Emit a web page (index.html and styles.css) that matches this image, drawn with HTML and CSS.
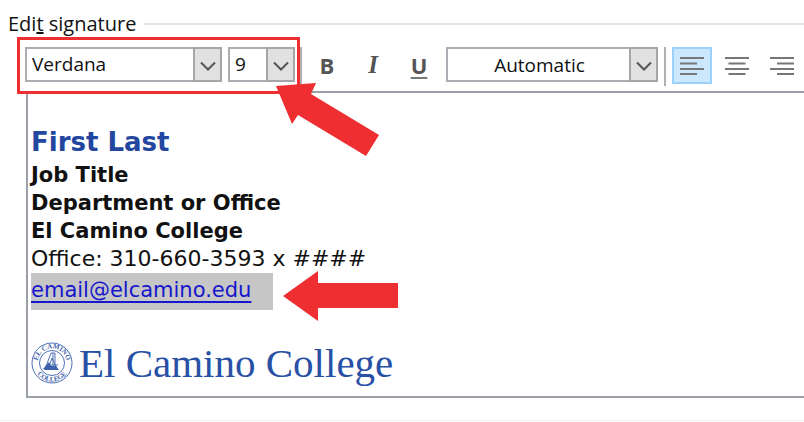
FILE: index.html
```html
<!DOCTYPE html>
<html lang="en">
<head>
    <meta charset="UTF-8">
    <meta name="viewport" content="width=device-width, initial-scale=1.0">
    <title>Edit signature</title>
    <link rel="stylesheet" href="styles.css">
</head>
<body>
    <main class="panel">
        <h1 class="panel-title"><span>Edi<u>t</u> signature</span></h1>

        <div class="toolbar">
            <div class="font-group">
                <div class="combo combo-font">
                    <select aria-label="Font">
                        <option>Verdana</option>
                    </select>
                    <span class="combo-arrow"><svg width="16" height="10" viewBox="0 0 16 10"><path d="M1 1.500L8 8.500L15 1.500"/></svg></span>
                </div>
                <div class="combo combo-size">
                    <select aria-label="Font size">
                        <option>9</option>
                    </select>
                    <span class="combo-arrow"><svg width="16" height="10" viewBox="0 0 16 10"><path d="M1 1.500L8 8.500L15 1.500"/></svg></span>
                </div>
            </div>
            <span class="separator"></span>
            <div class="style-group">
                <button class="style-button" type="button" aria-label="Bold">B</button>
                <button class="style-button italic" type="button" aria-label="Italic">I</button>
                <button class="style-button underline" type="button" aria-label="Underline"><span>U</span></button>
            </div>
            <div class="combo combo-color">
                <select aria-label="Font color">
                    <option>Automatic</option>
                </select>
                <span class="combo-arrow"><svg width="16" height="10" viewBox="0 0 16 10"><path d="M1 1.500L8 8.500L15 1.500"/></svg></span>
            </div>
            <span class="separator"></span>
            <div class="align-group">
                <button class="align-button active" type="button" aria-label="Align left">
                    <svg width="26" height="20" viewBox="0 0 26 20"><path d="M1 2H25M1 7.500H18M1 13H25M1 18H18"/></svg>
                </button>
                <button class="align-button" type="button" aria-label="Center">
                    <svg width="26" height="20" viewBox="0 0 26 20"><path d="M1 2H25M4.500 7.500H21.500M1 13H25M4.500 18H21.500"/></svg>
                </button>
                <button class="align-button" type="button" aria-label="Align right">
                    <svg width="26" height="20" viewBox="0 0 26 20"><path d="M1 2H25M8 7.500H25M1 13H25M8 18H25"/></svg>
                </button>
            </div>
        </div>

        <div class="editor">
            <p class="name">First Last</p>
            <p class="detail">Job Title</p>
            <p class="detail">Department or Office</p>
            <p class="detail">El Camino College</p>
            <p class="phone">Office: 310-660-3593 x ####</p>
            <p class="email"><a href="mailto:email@elcamino.edu">email@elcamino.edu</a></p>
            <div class="logo">
                <svg class="seal" width="42" height="42" viewBox="0 0 42 42">
                    <defs>
                        <path id="seal-top" d="M6.500 21a14.500 14.500 0 0 1 29 0"/>
                        <path id="seal-bottom" d="M2.500 21a18.500 18.500 0 0 0 37 0"/>
                    </defs>
                    <circle cx="21" cy="21" r="20"/>
                    <circle cx="21" cy="21" r="12.500"/>
                    <text><textPath href="#seal-top" startOffset="50%">EL CAMINO</textPath></text>
                    <text><textPath href="#seal-bottom" startOffset="50%">COLLEGE</textPath></text>
                    <path class="tower" d="M14 27L20 11H24V28M17 27L21 16L26 27M15 23H27M22 11V24"/>
                    <path class="base" d="M12 27L18 20L20 24H25L28 28H14Z"/>
                </svg>
                <span class="logo-text">El Camino College</span>
            </div>
            <svg class="pointer-email" width="116" height="50" viewBox="0 0 116 50"><path d="M0 25L35 0V12H115V37H35V50Z"/></svg>
        </div>
        <svg class="pointer-font" width="104" height="74" viewBox="0 0 104 74"><path d="M0 3L40 0L35 11L103 52L90 73L22 32L16 41Z"/></svg>
    </main>
</body>
</html>
```
FILE: styles.css
```css
* {
    box-sizing: border-box;
}

body {
    margin: 0;
    background-color: #fff;
    font-family: "Open Sans", "Noto Sans", sans-serif;
    color: #111;
    overflow-x: hidden;
}

.panel {
    position: relative;
    padding: 10px 0 22px;
    border-bottom: 1px solid #f0f0f0;
}

.panel-title {
    display: flex;
    align-items: center;
    gap: 8px;
    margin: 0 0 9px;
    padding-left: 8px;
    font-size: 20px;
    font-weight: 400;
    line-height: 28px;
}

.panel-title::after {
    content: "";
    flex: 1;
    height: 2px;
    background-color: #e2e2e2;
}

/* Toolbar */

.toolbar {
    display: flex;
    align-items: flex-start;
    height: 44px;
    padding-left: 25px;
}

.font-group {
    position: relative;
    display: flex;
    gap: 6px;
    margin-right: 5px;
}

/* Red frame round the font boxes */
.font-group::after {
    content: "";
    position: absolute;
    inset: -10px -5px -12px -8px;
    z-index: 1;
    border: 3px solid #ee2e31;
    pointer-events: none;
}

.combo {
    position: relative;
    height: 35px;
}

.combo-font {
    width: 197px;
}

.combo-size {
    width: 67px;
}

.combo-color {
    width: 212px;
    margin-right: 6px;
}

.combo select {
    appearance: none;
    width: 100%;
    height: 100%;
    padding: 0 30px 2px 5px;
    border: 2px solid #abadb3;
    border-radius: 0;
    background-color: #fff;
    color: #111;
    font-family: inherit;
    font-size: 19px;
}

.combo-color select {
    padding-bottom: 0;
    text-align: center;
    text-align-last: center;
}

.combo-arrow {
    position: absolute;
    top: 0;
    right: 0;
    bottom: 0;
    display: flex;
    align-items: center;
    justify-content: center;
    width: 29px;
    border: 2px solid #a6a6aa;
    background-color: #e1e1e1;
    pointer-events: none;
}

.combo-arrow svg {
    margin-top: 2px;
    fill: none;
    stroke: #555;
    stroke-width: 2;
}

.separator {
    width: 2px;
    height: 39px;
    background-color: #b0b0b0;
}

.style-group {
    display: flex;
    margin: 0 4px 0 2px;
}

.style-button,
.align-button {
    padding: 0;
    border: none;
    background: none;
}

.style-button {
    width: 46px;
    height: 36px;
    color: #555;
    font-family: "Open Sans", "Noto Sans", sans-serif;
    font-size: 22px;
    font-weight: 700;
    line-height: 36px;
}

.italic {
    font-family: "Liberation Serif", serif;
    font-size: 25px;
    font-style: italic;
}

.underline span {
    text-decoration: underline 2px #777;
    text-underline-offset: 3px;
}

.align-group {
    display: flex;
    gap: 5px;
    margin-left: 6px;
}

.align-button {
    display: flex;
    align-items: center;
    justify-content: center;
    width: 40px;
    height: 37px;
}

.align-button.active {
    border: 2px solid #99d1ff;
    background-color: #cce8ff;
}

.align-button svg {
    stroke: #777;
    stroke-width: 2;
}

/* Signature text */

.editor {
    position: relative;
    margin-left: 26px;
    padding: 32px 0 8px 3px;
    border: 2px solid #9a9fa8;
    border-right: none;
    font-family: "DejaVu Sans", Verdana, sans-serif;
    font-size: 21px;
    line-height: 28px;
}

.editor p {
    margin: 0;
}

.editor .name {
    padding-bottom: 2px;
    color: #23479f;
    font-size: 26px;
    font-weight: 700;
    line-height: 34px;
}

.detail {
    font-weight: 700;
}

.phone {
    font-size: 22px;
}

.editor .email {
    width: 242px;
    padding-bottom: 3px;
    background-color: #c6c6c6;
    line-height: 34px;
}

.email a {
    color: #1717cc;
    text-decoration-thickness: 2px;
    text-decoration-skip-ink: none;
    text-underline-offset: 4px;
}

.logo {
    display: flex;
    align-items: center;
    gap: 6px;
    margin-top: 28px;
}

.seal {
    flex: none;
    fill: none;
    stroke: #4f70b5;
    stroke-width: 1;
}

.seal text {
    fill: #3f62ad;
    stroke: none;
    font-family: "Liberation Serif", serif;
    font-size: 7px;
    font-weight: 700;
    text-anchor: middle;
}

.seal .base {
    fill: #3f62ad;
    stroke: none;
}

.logo-text {
    color: #2850a5;
    font-family: "Liberation Serif", serif;
    font-size: 41px;
    line-height: 50px;
    white-space: nowrap;
}

/* Red arrows */

.pointer-font,
.pointer-email {
    position: absolute;
    z-index: 2;
    fill: #ee2e31;
}

.pointer-font {
    top: 83px;
    left: 276px;
}

.pointer-email {
    top: 178px;
    left: 255px;
}
```
